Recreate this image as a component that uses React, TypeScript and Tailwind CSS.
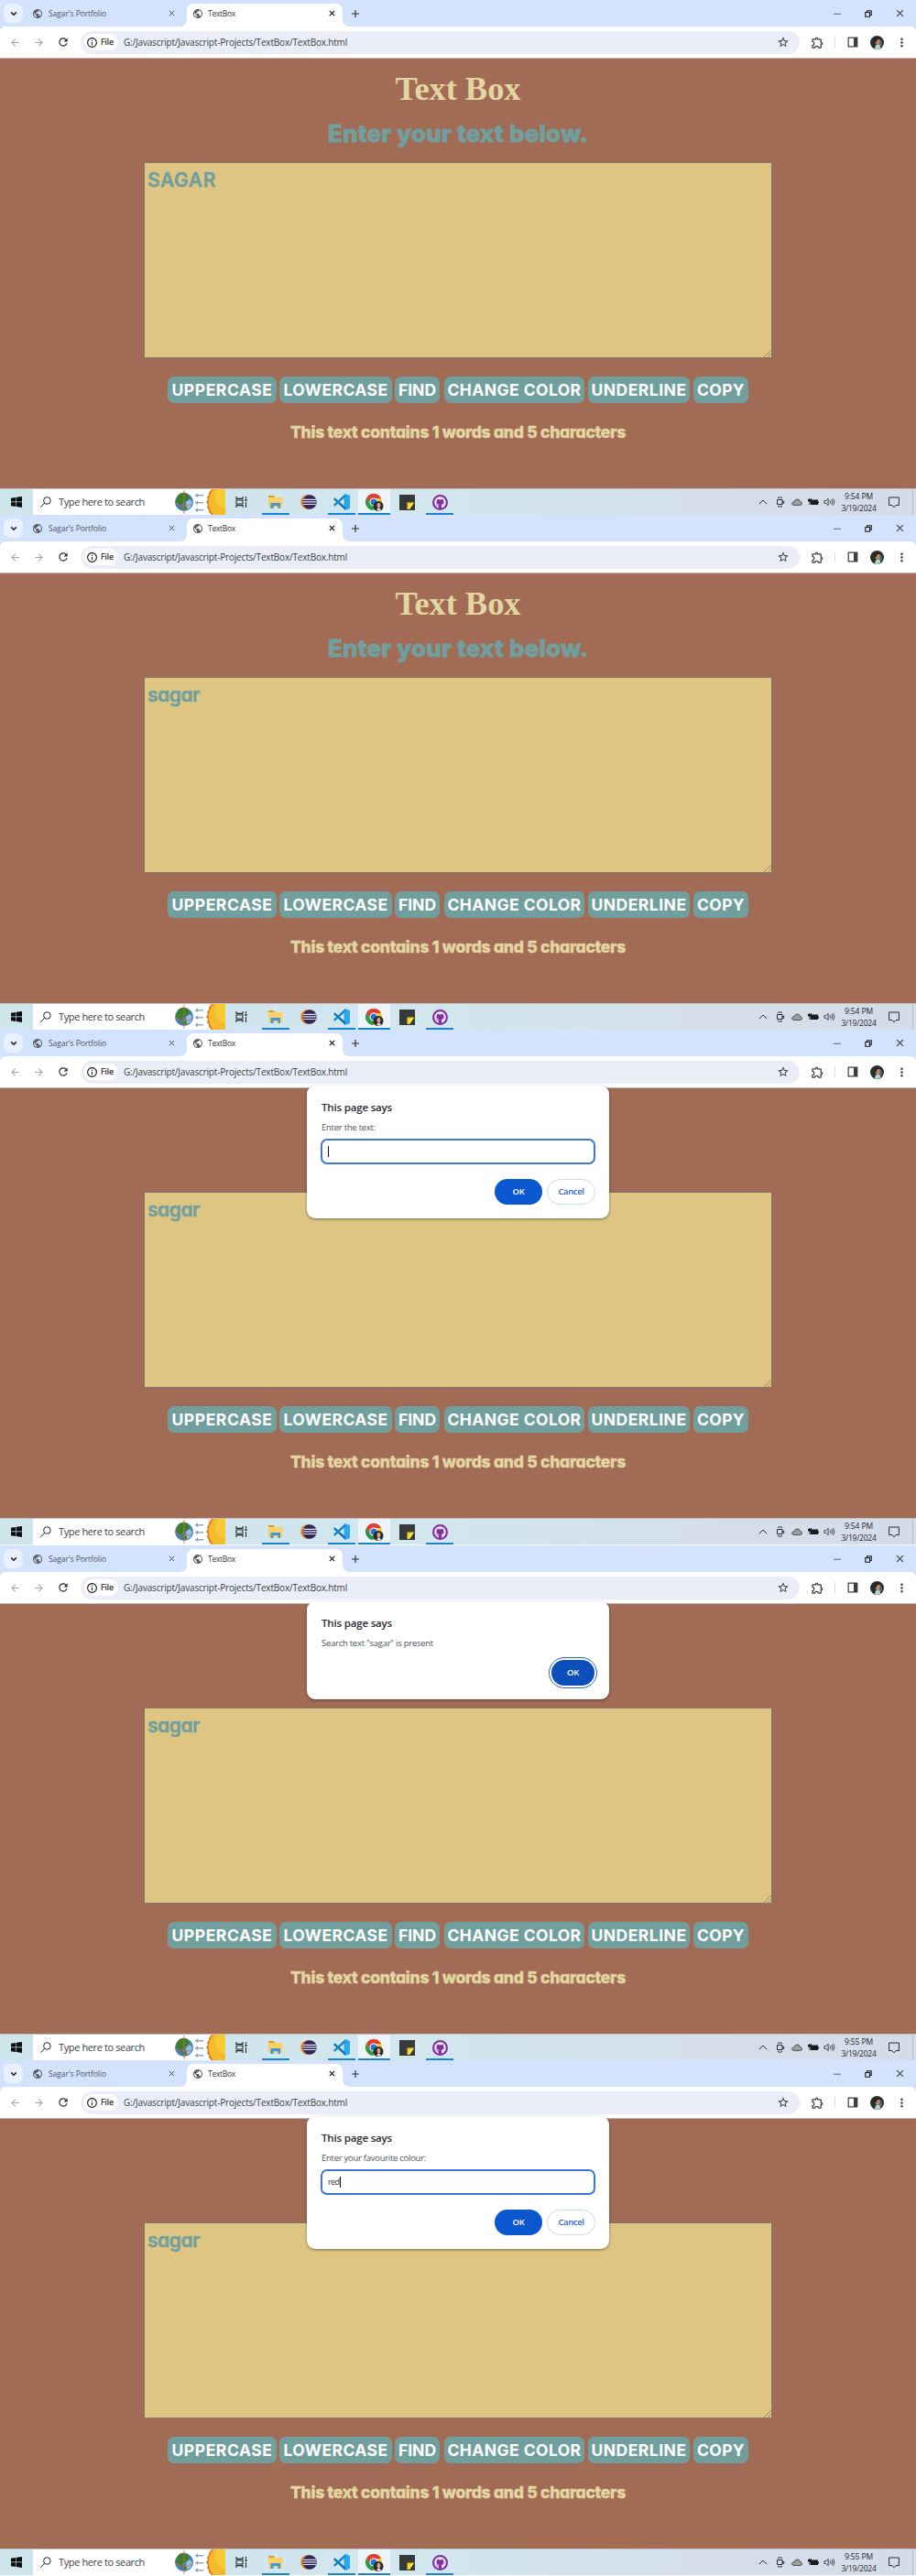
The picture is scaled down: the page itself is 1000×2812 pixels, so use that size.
import React, { useLayoutEffect, useRef, useState } from 'react';
import {
  MdArrowBack,
  MdArrowForward,
  MdInfoOutline,
  MdMoreVert,
  MdOutlineExtension,
  MdPublic,
  MdRefresh,
  MdStarBorder,
} from 'react-icons/md';
import { FaGithub } from 'react-icons/fa';

/** Single-line label whose tracking is adjusted to fill the given width. */
function Label({ text, width, className = '' }: { text: string; width: number; className?: string }) {
  const ref = useRef<HTMLSpanElement>(null);
  const [spacing, setSpacing] = useState(0);
  useLayoutEffect(() => {
    if (ref.current) {
      setSpacing((width - ref.current.getBoundingClientRect().width) / text.length);
    }
  }, [text, width]);
  return (
    <span ref={ref} className={`inline-block whitespace-nowrap ${className}`} style={{ letterSpacing: spacing }}>
      {text}
    </span>
  );
}

function Cross({ className = '' }: { className?: string }) {
  return (
    <svg viewBox="0 0 8 8" className={className} fill="none" stroke="currentColor">
      <path d="M1 1l6 6M7 1L1 7" />
    </svg>
  );
}

function Avatar({ className }: { className: string }) {
  return (
    <svg viewBox="0 0 16 16" className={className}>
      <circle cx="8" cy="8" r="8" fill="#26302b" />
      <path d="M9.5 3c3 1 5 4 4.500 8L10 15l-2-2z" fill="#59645a" />
      <ellipse cx="8.600" cy="6.800" rx="2.600" ry="3.400" fill="#b98a74" />
      <path d="M5 6c0-4 5-5 6.500-2L8 4.500 7 8z" fill="#2b1a17" />
      <path d="M5 15l2-4.500h4l1 4c-2 2-5 1.800-7 .5z" fill="#b5d3d0" />
    </svg>
  );
}

function TabStrip() {
  return (
    <div className="flex h-[29px] bg-[#d3e2fd] pt-1">
      <div className="ml-1 flex h-[21px] w-[21px] items-center justify-center rounded-[7px] bg-[#e9f1fe]">
        <svg viewBox="0 0 8 6" className="h-[6px] w-2" fill="none" stroke="#1f2328" strokeWidth="1.600">
          <path d="M1.200 1.400L4 4.200l2.800-2.800" />
        </svg>
      </div>
      <div className="ml-[10px] flex h-[21px] w-[157px] items-center">
        <MdPublic className="h-[12px] w-[12px] text-[#5a5e64]" />
        <Label text="Sagar's Portfolio" width={63} className="ml-[6px] mt-px text-[8.500px] text-[#50555e]" />
        <Cross className="ml-auto mr-[1px] h-[7px] w-[7px] text-[#3a3d42]" />
      </div>
      <div className="relative ml-[12px] flex h-[25px] w-[170px] items-center rounded-t-[7px] bg-white pb-1 pl-[6px] pr-2">
        <span className="absolute bottom-0 -left-[7px] h-[7px] w-[7px] bg-[radial-gradient(circle_at_0_0,#d3e2fd_6.500px,white_7px)]" />
        <span className="absolute bottom-0 -right-[7px] h-[7px] w-[7px] bg-[radial-gradient(circle_at_100%_0,#d3e2fd_6.500px,white_7px)]" />
        <MdPublic className="h-[12px] w-[12px] text-[#5a5e64]" />
        <Label text="TextBox" width={30} className="ml-[5px] mt-px text-[8.500px] text-[#33363b]" />
        <Cross className="ml-auto h-[7px] w-[7px] text-[#111] [stroke-width:1.300]" />
      </div>
      <svg viewBox="0 0 8 8" className="ml-[10px] mt-[7px] h-2 w-2" stroke="#333" strokeWidth="1.200">
        <path d="M4 0v8M0 4h8" />
      </svg>
      <div className="ml-auto mr-[13px] flex h-[21px] items-center gap-[26px]">
        <svg viewBox="0 0 8 8" className="h-2 w-2" stroke="#777e8b" strokeWidth="1.200">
          <path d="M0 4.300h8" />
        </svg>
        <svg viewBox="0 0 8 8" className="h-2 w-2" fill="none" stroke="#15171a" strokeWidth="1.100">
          <path d="M.8 2.500h4.700v4.700H.8zM2.500 2.300V.8h4.700v4.700H5.700" />
        </svg>
        <Cross className="h-[9px] w-[9px] text-[#33363b] [stroke-width:.9]" />
      </div>
    </div>
  );
}

function Toolbar() {
  return (
    <div className="bg-[#d3e2fd]">
      <div className="flex h-[35px] items-center rounded-t-[6px] border-b border-[#c3b4ae] bg-white">
        <MdArrowBack className="ml-[10px] h-[13px] w-[13px] text-[#a4a6a9]" />
        <MdArrowForward className="ml-[13px] h-[13px] w-[13px] text-[#a4a6a9]" />
        <MdRefresh className="ml-[13px] h-[14px] w-[14px] text-[#303236]" />
        <div className="ml-[12px] flex h-[25px] w-[785px] items-center rounded-full bg-[#ebeef8] pl-[4px] pr-[11px]">
          <div className="flex h-[18px] w-[37px] items-center rounded-full bg-white pl-[2px]">
            <MdInfoOutline className="h-[13px] w-[13px] text-[#202124]" />
            <Label text="File" width={14} className="ml-[3px] text-[9px] text-[#202124] [-webkit-text-stroke:.2px]" />
          </div>
          <Label
            text="G:/Javascript/Javascript-Projects/TextBox/TextBox.html"
            width={244}
            className="ml-[6px] text-[10px] text-[#3b3e43]"
          />
          <MdStarBorder className="ml-auto h-[14px] w-[14px] text-[#3b3e43]" />
        </div>
        <MdOutlineExtension className="ml-[12px] h-[15px] w-[15px] text-[#3b3e43]" />
        <div className="ml-[11px] h-[12px] w-px bg-[#cfdffa]" />
        <svg viewBox="0 0 12 12" className="ml-[13px] h-[12px] w-[12px]">
          <path d="M1.200 1.200h9.600v9.600H1.200z" fill="none" stroke="#3d3f43" strokeWidth="1.200" />
          <path d="M7 1h4v10H7z" fill="#3d3f43" />
        </svg>
        <Avatar className="ml-[13px] h-[15px] w-[15px]" />
        <MdMoreVert className="ml-[12px] h-[15px] w-[15px] text-[#3b3e43]" />
      </div>
    </div>
  );
}

const ACTIONS = [
  { text: 'UPPERCASE', width: 110, box: 'w-[119px]' },
  { text: 'LOWERCASE', width: 114, box: 'w-[123px] ml-[3px]' },
  { text: 'FIND', width: 41, box: 'w-[49px] ml-[3px]' },
  { text: 'CHANGE COLOR', width: 146, box: 'w-[153px] ml-[5px]' },
  { text: 'UNDERLINE', width: 104, box: 'w-[111px] ml-[4px]' },
  { text: 'COPY', width: 52, box: 'w-[60px] ml-[4px]' },
];

function Page({ value, valueWidth, covered }: { value: string; valueWidth: number; covered: boolean }) {
  return (
    <div className="flex h-[469px] flex-col items-center bg-[#a26b56] font-[Inter,sans-serif] [font-feature-settings:'cv11']">
      <h1
        className={`mt-[11px] h-[44px] font-['Liberation_Serif',serif] text-[36.500px] font-bold leading-[44px] text-[#e3d6a3] ${covered ? 'invisible' : ''}`}
      >
        <Label text="Text Box" width={137} />
      </h1>
      <h2
        className={`mt-[9px] h-[36px] text-[26px] font-extrabold leading-[36px] text-[#719f9d] [-webkit-text-stroke:.8px_#719f9d] ${covered ? 'invisible' : ''}`}
      >
        <Label text="Enter your text below." width={284} />
      </h2>
      <div className="relative mt-[13px] h-[214px] w-[686px] border border-[#83796a] bg-[#dec583] pl-[3px] pt-[4px] text-[21px] font-semibold leading-[30px] text-[#719f9d] [-webkit-text-stroke:.4px_#719f9d]">
        <Label text={value} width={valueWidth} />
        <svg viewBox="0 0 8 8" className="absolute bottom-0 right-0 h-2 w-2" stroke="#8c8263" strokeWidth=".8">
          <path d="M0 8l8-8M4 8l4-4" />
        </svg>
      </div>
      <div className="mt-[20px] flex h-[29px]">
        {ACTIONS.map((a) => (
          <button
            key={a.text}
            className={`flex h-[29px] items-center justify-center rounded-[7px] bg-[#719f9d] pt-px text-[17.500px] font-bold text-white ${a.box}`}
          >
            <Label text={a.text} width={a.width} />
          </button>
        ))}
      </div>
      <p className="mt-[19px] h-[26px] text-[17.500px] font-extrabold leading-[26px] text-[#e3d6a3] [-webkit-text-stroke:.4px_#e3d6a3]">
        <Label text="This text contains 1 words and 5 characters" width={366} />
      </p>
    </div>
  );
}

type DialogData = { message: string; width: number; input?: string };

function Dialog({ message, width, input }: DialogData) {
  const prompt = input !== undefined;
  return (
    <div
      className={`absolute left-[335px] top-[61px] flex w-[330px] flex-col rounded-[9px] bg-white px-[15px] shadow-[0_1px_3px_rgba(0,0,0,.45)] ${prompt ? 'h-[145px]' : 'h-[107px]'}`}
    >
      <div className="mt-[16px] h-4 pl-px text-[11.500px] font-semibold leading-4 text-[#2a2c30]">
        <Label text="This page says" width={77} />
      </div>
      <div className="mt-[7px] h-[14px] pl-px text-[9.500px] leading-[14px] text-[#505358]">
        <Label text={message} width={width} />
      </div>
      {prompt ? (
        <>
          <div className="mt-[5px] flex h-[28px] w-[300px] items-center rounded-[7px] border-2 border-[#3c76dc] pl-[6px] text-[9px] text-[#33363b]">
            {input && <Label text={input} width={12.5} />}
            <span className="h-[12px] w-px bg-[#111]" />
          </div>
          <div className="mt-[16px] flex gap-[5px] self-end text-[9.500px] font-semibold">
            <div className="flex h-[28px] w-[52px] items-center justify-center rounded-full bg-[#0b57d0] text-white">
              <Label text="OK" width={13} />
            </div>
            <div className="flex h-[28px] w-[53px] items-center justify-center rounded-full border border-[#c9dafa] text-[#2b62cf]">
              <Label text="Cancel" width={28} />
            </div>
          </div>
        </>
      ) : (
        <div className="-mr-[2px] mt-[8px] flex h-[34px] w-[53px] items-center justify-center self-end rounded-full border-[1.500px] border-[#2463d4] bg-white text-[9.500px] font-semibold text-white">
          <div className="flex h-[28px] w-[47px] items-center justify-center rounded-full bg-[#0d4fba]">
            <Label text="OK" width={13} />
          </div>
        </div>
      )}
    </div>
  );
}

function SearchArt() {
  return (
    <svg viewBox="0 0 56 28" className="h-full w-[56px]">
      <circle cx="11" cy="14" r="10" fill="#477fb5" />
      <path d="M4 7c3-4 8-4 10-2l3 4-4 5-4 1-1 5-3-4-3-2z" fill="#3e7d29" />
      <path d="M13 14l4-3 3 3-2 6-4 2z" fill="#8bc4e8" />
      <path d="M9 17l4 1 1 3-4 2z" fill="#3e7d29" />
      <path d="M1 14c4 5 15 6 20 1M11 1v26" fill="none" stroke="#df684d" strokeWidth=".8" />
      <path d="M23 6h9v1.500h-9zM23 14h9v1.500h-9zM23 22h9v1.500h-9zM23 6.700l3-2.500v5zM23 14.700l3-2.500v5zM23 22.700l3-2.500v5z" fill="#8ea6c4" />
      <path d="M56 0H41l-3 4 0 2-2 3 1 2-2 3 2 3-1 3 2 3 0 2 3 3h15z" fill="#e57b18" />
      <path d="M56 0H43c-7 8-7 20 0 28h13z" fill="#f4bc2c" />
      <path d="M56 0H47c-4 9-2 19 9 21z" fill="#fac938" />
    </svg>
  );
}

function Slot({ children, active, className = 'w-9' }: { children: React.ReactNode; active?: boolean; className?: string }) {
  return (
    <div className={`relative flex h-full items-center justify-center ${className}`}>
      {children}
      {active && <span className="absolute inset-x-[3px] bottom-0 h-[2px] bg-[#1683d3]" />}
    </div>
  );
}

function Taskbar({ time }: { time: string }) {
  return (
    <div className="flex h-[29px] border-t border-[#c2bfbc] bg-[linear-gradient(90deg,#cee5ec_0%,#d2e6ee_50%,#d4dfea_75%,#d5dce9_100%)]">
      <div className="flex h-full w-[36px] items-center justify-center">
        <svg viewBox="0 0 12 12" className="h-[12px] w-[12px]" fill="#0b0d10">
          <path d="M0 1.700l5.400-.8v4.700H0zM6 .8L12 0v5.600H6zM0 6.300h5.400V11L0 10.300zM6 6.300h6V12l-6-.9z" />
        </svg>
      </div>
      <div className="flex h-full w-[210px] items-center bg-white pl-[8px]">
        <svg viewBox="0 0 12 12" className="h-[12px] w-[12px]" fill="none" stroke="#222">
          <circle cx="7.400" cy="4.500" r="3.800" />
          <path d="M4.600 7.300L.4 11.600" />
        </svg>
        <Label text="Type here to search" width={94} className="ml-[8px] text-[11px] text-[#3e4043]" />
        <div className="ml-auto h-full">
          <SearchArt />
        </div>
      </div>
      <Slot className="w-[36px]">
        <svg viewBox="0 0 14 12" className="h-[12px] w-[14px]" fill="none" stroke="#25292c" strokeWidth="1.100">
          <path d="M1 0v2.400h7V0M1 12V9.600h7V12M1 4h7v4H1zM11.500 0v2.500M11.500 6v6" />
          <path d="M10.500 3h2v2h-2z" fill="#25292c" stroke="none" />
        </svg>
      </Slot>
      <Slot active className="ml-px w-9">
        <svg viewBox="0 0 16 14" className="h-[14px] w-4">
          <path d="M0 0h6l1 2h-7z" fill="#dca021" />
          <path d="M0 2h15.500v11H0z" fill="#fad167" />
          <path d="M2.500 14V8h10.500v6h-2.500v-3h-5v3z" fill="#3e96dc" />
        </svg>
      </Slot>
      <Slot>
        <svg viewBox="0 0 18 16" className="h-4 w-[18px]">
          <circle cx="8" cy="8" r="8" fill="#f19434" />
          <circle cx="10" cy="8" r="7.800" fill="#302858" />
          <path d="M3 5.300h14M2.500 7.900h15M3 10.500h14" stroke="#e2e0ec" strokeWidth="1.200" />
        </svg>
      </Slot>
      <Slot active>
        <svg viewBox="0 0 18 18" className="h-[18px] w-[18px]">
          <path d="M13 0l5 2v14l-5 2-1.500-3V3z" fill="#2ba7ee" />
          <path d="M1.500 4.200L13 14.500V18L0 6z" fill="#0a74b8" />
          <path d="M1.500 13.800L13 3.500V0L0 12z" fill="#1188cd" />
        </svg>
      </Slot>
      <div className="flex h-full w-[35px] items-center justify-center border-b-2 border-[#1683d3] bg-[#edf4f9] pt-[2px]">
        <svg viewBox="0 0 20 19" className="h-[19px] w-5">
          <circle cx="9" cy="9" r="9" fill="#f9c828" />
          <path d="M1.200 4.500A9 9 0 0 1 17 5H9L5 11z" fill="#e13e32" />
          <path d="M1.200 4.500A9 9 0 0 0 8 18l4-6-7-1z" fill="#289c4b" />
          <circle cx="9" cy="9" r="4.500" fill="#fff" />
          <circle cx="9" cy="9" r="3.500" fill="#2576d9" />
          <circle cx="14" cy="13.500" r="5.500" fill="#302823" />
          <ellipse cx="14.500" cy="12.500" rx="2" ry="2.700" fill="#c4a79a" />
          <path d="M12 18l2-3 3 2-1 2z" fill="#d8d9da" />
        </svg>
      </div>
      <Slot>
        <svg viewBox="0 0 17 17" className="h-[17px] w-[17px]">
          <path d="M0 0h17v17H0z" fill="#38393a" />
          <path d="M8.500 8.500H16L11 16H8.500z" fill="#f6d313" />
          <path d="M11 16l.3-4.500L16 8.500z" fill="#fff07b" />
        </svg>
      </Slot>
      <Slot active>
        <span className="flex h-[17px] w-[17px] items-center justify-center rounded-full bg-[#8130a4]">
          <FaGithub className="h-[13px] w-[13px] text-[#f3e9f6]" />
        </span>
      </Slot>
      <div className="ml-auto flex h-full items-center text-[#262a30]">
        <svg viewBox="0 0 10 6" className="h-[6px] w-[10px]" fill="none" stroke="currentColor">
          <path d="M.8 5.200L5 1l4.200 4.200" />
        </svg>
        <svg viewBox="0 0 10 12" className="ml-[9px] h-[12px] w-[10px]" fill="none" stroke="currentColor">
          <path d="M1.500 3.500H7v5H1.500zM7 5.300h1.800v2H7M2 1.500Q5 0 7 1.500M2 10.500q3 1.500 5 0" />
        </svg>
        <svg viewBox="0 0 12 8" className="ml-[7px] h-2 w-[12px]" stroke="#33383d" strokeWidth=".8" fill="#9b9d9f">
          <path d="M3 7.500Q.5 7.400.5 5.500 1 3.700 3 3.800 4 .5 7 1q2 .2 2.500 2.500Q11.500 4 11.500 5.700 11.400 7.500 9.500 7.500z" />
        </svg>
        <svg viewBox="0 0 12 8" className="ml-[6px] h-2 w-[12px]" fill="#191c20">
          <path d="M3 1.500h8V7H3zM11 3.500h1v2h-1zM0 1h1V0h1v1h1V0h1v3L2.500 4v3h-1V4L0 3z" />
        </svg>
        <svg viewBox="0 0 14 10" className="ml-[5px] h-[10px] w-[13px]" fill="none" stroke="currentColor" strokeWidth=".9">
          <path d="M1 3.500h2L5.500 1v8L3 6.500H1zM7.500 3.200q1.300 1.800 0 3.600M9.500 2q2 3 0 6M11.300.8q3 4.200 0 8.400" />
        </svg>
        <div className="ml-[6px] flex w-[39px] flex-col items-center text-[8.500px] leading-[13px] text-[#24282e]">
          <Label text={time} width={31} />
          <Label text="3/19/2024" width={38} />
        </div>
        <svg viewBox="0 0 12 13" className="ml-[13px] h-[13px] w-[12px]" fill="none" stroke="currentColor">
          <path d="M.6 1h10.800v8.500H8L6 11.800l-2-2.300H.6z" />
        </svg>
        <div className="ml-[14px] mr-[3px] h-[28px] w-px bg-[#b9bfcb]" />
      </div>
    </div>
  );
}

type Shot = { value: string; valueWidth: number; time: string; height: string; dialog?: DialogData };

const SHOTS: Shot[] = [
  { value: 'SAGAR', valueWidth: 75, time: '9:54 PM', height: 'h-[562px]' },
  { value: 'sagar', valueWidth: 57, time: '9:54 PM', height: 'h-[562px]' },
  {
    value: 'sagar',
    valueWidth: 57,
    time: '9:54 PM',
    height: 'h-[563px]',
    dialog: { message: 'Enter the text:', width: 59, input: '' },
  },
  {
    value: 'sagar',
    valueWidth: 57,
    time: '9:55 PM',
    height: 'h-[562px]',
    dialog: { message: 'Search text "sagar" is present', width: 122 },
  },
  {
    value: 'sagar',
    valueWidth: 57,
    time: '9:55 PM',
    height: 'h-[563px]',
    dialog: { message: 'Enter your favourite colour:', width: 114, input: 'red' },
  },
];

export default function App() {
  return (
    <div className="w-[1000px] bg-white font-['Open_Sans','Noto_Sans',sans-serif]">
      {SHOTS.map((shot, i) => (
        <section key={i} className={`relative overflow-hidden ${shot.height}`}>
          <TabStrip />
          <Toolbar />
          <Page value={shot.value} valueWidth={shot.valueWidth} covered={shot.dialog !== undefined} />
          <Taskbar time={shot.time} />
          {shot.dialog && <Dialog {...shot.dialog} />}
        </section>
      ))}
    </div>
  );
}
